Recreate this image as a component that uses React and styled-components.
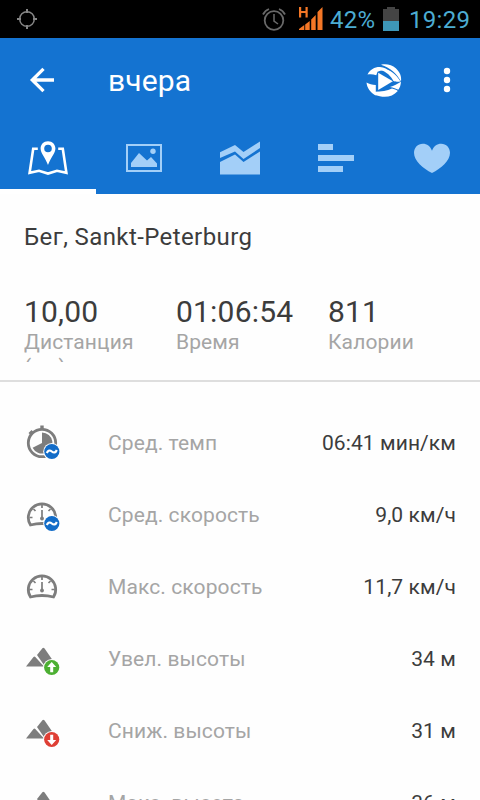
import React, { useState } from 'react';
import styled, { createGlobalStyle } from 'styled-components';

const GlobalStyle = createGlobalStyle`
  * {
    box-sizing: border-box;
  }

  body {
    margin: 0;
    background: #fefefe;
    font-family: Roboto, "Noto Sans", sans-serif;
    overflow: hidden;
  }

  svg {
    display: block;
    flex: none;
  }
`;

const Screen = styled.div`
  display: flex;
  flex-direction: column;
  width: 480px;
  height: 800px;
  overflow: hidden;
  background: #fefefe;
`;

const StatusBar = styled.div`
  display: flex;
  flex: none;
  align-items: center;
  height: 38px;
  padding: 0 10px 0 15px;
  background: #000;
`;

const StatusText = styled.span`
  width: ${(props) => props.width}px;
  margin-left: ${(props) => props.gap}px;
  padding-top: 2px;
  color: #4cacd2;
  font-size: 24px;
  line-height: 36px;
  letter-spacing: 0.3px;
  white-space: nowrap;
`;

const StatusIcons = styled.div`
  display: flex;
  gap: 11px;
  margin-left: auto;
`;

const Header = styled.header`
  flex: none;
  height: 156px;
  background: #1473d1;
`;

const Toolbar = styled.div`
  display: flex;
  align-items: center;
  height: 84px;
  padding-left: 24px;
`;

const IconButton = styled.button`
  display: flex;
  align-items: center;
  justify-content: center;
  width: ${(props) => props.width}px;
  height: 48px;
  padding: 0;
  border: 0;
  background: none;
`;

const MenuButton = styled(IconButton)`
  margin-left: 12px;
`;

const Title = styled.h1`
  flex: 1;
  margin: 0 0 0 48px;
  padding-top: 1px;
  color: #fff;
  font-size: 30px;
  font-weight: 400;
  line-height: 40px;
  letter-spacing: 0.1px;
`;

const Tabs = styled.nav`
  display: flex;
  height: 72px;
`;

const Tab = styled.button`
  display: flex;
  justify-content: center;
  width: 96px;
  padding: 16px 0 0;
  border: 0;
  border-bottom: 5px solid ${(props) => (props.$active ? '#fff' : 'transparent')};
  background: none;
  color: ${(props) => (props.$active ? '#fff' : '#a3cff8')};
`;

const Summary = styled.section`
  flex: none;
  height: 188px;
  padding: 27px 24px 0;
  border-bottom: 2px solid #dedede;
`;

const Activity = styled.h2`
  margin: 0;
  color: #3c3c3c;
  font-size: 24px;
  font-weight: 400;
  line-height: 32px;
  letter-spacing: 0.4px;
`;

const Totals = styled.div`
  display: grid;
  grid-template-columns: repeat(3, 128px);
  gap: 24px;
  height: 70px;
  margin-top: 39px;
  overflow: hidden;
`;

const Total = styled.div`
  color: #3c3c3c;
  font-size: 30px;
  line-height: 40px;
  letter-spacing: 0.2px;
`;

const TotalLabel = styled.div`
  margin-top: -2px;
  color: #a5a5a5;
  font-size: 21px;
  line-height: 25px;
  letter-spacing: 0.12px;
`;

const Stats = styled.ul`
  flex: none;
  margin: 0;
  padding: 25px 24px 0;
  list-style: none;
`;

const Stat = styled.li`
  display: flex;
  align-items: center;
  height: 72px;
`;

const StatLabel = styled.span`
  flex: 1;
  margin-left: 44px;
  color: #a5a5a5;
  font-size: 21px;
  letter-spacing: 0.1px;
`;

const StatValue = styled.span`
  color: #3c3c3c;
  font-size: 21px;
  letter-spacing: 0.1px;
`;

const GpsIcon = () => (
  <svg width="24" height="24" viewBox="0 0 24 24" fill="none" stroke="#858585" strokeWidth="1.5">
    <circle cx="12" cy="12" r="7.3" />
    <path d="M12 2v4M12 18v4M2 12h4M18 12h4" strokeWidth="2" />
  </svg>
);

const AlarmIcon = () => (
  <svg width="26" height="26" viewBox="0 0 26 26" fill="none" stroke="#696969" strokeWidth="1.8">
    <circle cx="13" cy="14.5" r="9.3" />
    <path d="M13 8v7l4 3" strokeWidth="1.5" />
    <path d="M2 8.5Q4 4.5 8 3M18 3q4 1.500 6 5.500" />
  </svg>
);

const SignalIcon = () => (
  <svg width="26" height="25" viewBox="0 -1 26 25" fill="#f47726">
    <path d="M1 0h2.200v4h4.300V0h2.200v10.500H7.500V6H3.200v4.500H1z" />
    <path d="M1 23V22l5.300-4v5zM7.200 23v-5.500l4.500-3.500v9zM13.200 23V12.500L17.700 8v15zM19.500 23V5L24.500 0v23z" />
  </svg>
);

const BatteryIcon = () => (
  <svg width="16" height="24" viewBox="0 0 16 24">
    <path d="M4 0h8v2h4v12H0V2h4z" fill="#444" />
    <path d="M0 14h16v10H0z" fill="#3e97b8" />
  </svg>
);

const BackIcon = () => (
  <svg width="36" height="36" viewBox="0 0 36 36" fill="none" stroke="#fff" strokeWidth="3.3">
    <path d="M19.500 6.800 8.300 18l11.200 11.200M8.500 18H30" />
  </svg>
);

const GlobeIcon = () => (
  <svg width="36" height="36" viewBox="0 0 36 36" fill="#fff">
    <path d="M1.500 12.500C4 7.500 9 4.800 14 5c4 .2 7.500 2 11 5.500-5-2.500-9.500-2.500-13.500-.8l-1.200 3.500C7 12 4 12 1.500 12.500z" />
    <path d="M15 2.800C20 1.500 26 2.800 29.800 6.200c4 3.800 6 8 5.200 13.300C31 12 24 5.500 15 2.800z" />
    <path d="M14.500 7.500C22 6 29 10.500 34.500 19.500c-4 .4-5.500.3-7-.4C25 14 20.500 10 14.500 7.500z" />
    <path d="M12.200 10.800 26.900 19.300 12.200 28z" />
    <path d="M.5 20.500c2.800 1.500 5.500 2.200 9.300 2.400V29l-.3 4.500C4.500 30.500 1 26 .5 20.500z" />
    <path d="M24 25c4-1.300 7.500-3 11-5.200-.3 3.300-1 5.700-2.700 8-2.300-1.300-4.800-2.200-8.300-2.800z" />
    <path d="M8.500 29.700c7 0 12.500-1 17.500-3.200 2.200.4 4.200 1.300 5.800 2.400-4.600 5.300-11.300 7-18 5.300L9 33z" />
  </svg>
);

const MoreIcon = () => (
  <svg width="8" height="26" viewBox="0 0 8 26" fill="#fff">
    <circle cx="4" cy="4" r="3.200" />
    <circle cx="4" cy="13" r="3.200" />
    <circle cx="4" cy="22" r="3.200" />
  </svg>
);

const MapIcon = () => (
  <svg width="42" height="40" viewBox="0 0 42 40" fill="none" stroke="currentColor" strokeWidth="2.600">
    <path d="M10.800 10.800H6.200L2.600 34.800 12 32.800l9 2.800 9-2.800 9.400 2-3.600-24h-4.600" />
    <path
      d="M21 3.200c-4.400 0-7.400 3.200-7.400 7.300 0 4.800 4.400 8.500 7.400 16.500 3-8 7.400-11.700 7.400-16.500 0-4.100-3-7.300-7.400-7.300zm0 3.500a3.800 3.800 0 1 1 0 7.600 3.800 3.800 0 0 1 0-7.600z"
      fill="currentColor"
      stroke="none"
    />
  </svg>
);

const PhotoIcon = () => (
  <svg width="36" height="40" viewBox="0 0 36 40" fill="currentColor">
    <path d="M0 6h36v28H0zm2 2v24h32V8z" fillRule="evenodd" />
    <path d="M5 29v-4l8-10 8 7.500 4-3.500 6 6.500V29z" />
    <circle cx="27" cy="13.300" r="2.700" />
  </svg>
);

const ChartIcon = () => (
  <svg width="40" height="40" viewBox="0 0 40 40" fill="currentColor">
    <path d="M0 14.300 15 7l8.500 7L40 3.500V10L23.500 21l-8.500-7.500L0 20z" />
    <path d="M0 24l15-7.500 8.500 7.500L40 13.500V36.500H0z" />
  </svg>
);

const SplitsIcon = () => (
  <svg width="36" height="40" viewBox="0 0 36 40" fill="currentColor">
    <path d="M0 6h15v6H0zM0 17h36v6H0zM0 28h25v6H0z" />
  </svg>
);

const HeartIcon = () => (
  <svg width="36" height="40" viewBox="0 0 36 40" fill="currentColor">
    <path d="M18 35C9 30.500 0 23 0 14.800 0 9.500 3.800 5.700 8.800 5.700c4.200 0 7.600 2.400 9.200 7 1.600-4.600 5-7 9.200-7 5 0 8.800 3.800 8.800 9.100C36 23 27 30.500 18 35z" />
  </svg>
);

const AverageBadge = () => (
  <>
    <circle cx="27.800" cy="26.500" r="8.600" fill="#fefefe" />
    <circle cx="27.800" cy="26.500" r="7.600" fill="#126cc8" />
    <path d="M22.800 28c1.200-3 3.200-3 5-1.500s3.800 1.500 5-1.500" fill="none" stroke="#fff" strokeWidth="2.200" />
  </>
);

const PaceIcon = () => (
  <svg width="40" height="36" viewBox="0 0 40 36">
    <circle cx="18" cy="18" r="13.700" fill="none" stroke="#7d7d7d" strokeWidth="2.800" />
    <path d="M16.300 .500h3.400V5h-3.400zM4.500 8 7.500 5l2 2L6.500 10z" fill="#7d7d7d" />
    <path d="M18 18V7.500a10.500 10.500 0 1 1-9.400 15.200z" fill="#7d7d7d" />
    <AverageBadge />
  </svg>
);

const SpeedIcon = ({ average }) => (
  <svg width="40" height="36" viewBox="0 0 40 36">
    <path
      d="M6.500 28A13.700 13.700 0 1 1 29.500 28Q18 25 6.500 28z"
      fill="none"
      stroke="#7d7d7d"
      strokeWidth="2.800"
    />
    <path
      d="M18 7.500V11M5.500 20.500h3M30.500 20.500h-3M9.500 12l2 2M26.500 12l-2 2M18 13v8.500"
      fill="none"
      stroke="#7d7d7d"
      strokeWidth="1.700"
    />
    <circle cx="18" cy="21.500" r="1.900" fill="#7d7d7d" />
    {average && <AverageBadge />}
  </svg>
);

const ElevationIcon = ({ badge, down }) => (
  <svg width="40" height="36" viewBox="0 0 40 36">
    <path d="M18.400 7.300q1-1 2 0L33 25.500H21L13 14z" fill="#7d7d7d" />
    <path
      d="M2 25.500 9.500 16q.9-1 1.800 0L20 25.500z"
      fill="#7d7d7d"
      stroke="#fefefe"
      strokeWidth="1.800"
      paintOrder="stroke"
    />
    {badge && (
      <>
        <circle cx="27.700" cy="26.500" r="8.600" fill="#fefefe" />
        <circle cx="27.700" cy="26.500" r="7.600" fill={badge} />
        <path
          d="M27.700 21 32.200 26H29.200v5.300h-3V26h-3z"
          fill="#fff"
          transform={down ? 'rotate(180 27.700 26.500)' : undefined}
        />
      </>
    )}
  </svg>
);

const tabs = [MapIcon, PhotoIcon, ChartIcon, SplitsIcon, HeartIcon];

const totals = [
  { value: '10,00', label: 'Дистанция (км)' },
  { value: '01:06:54', label: 'Время' },
  { value: '811', label: 'Калории' },
];

const stats = [
  { icon: <PaceIcon />, label: 'Сред. темп', value: '06:41 мин/км' },
  { icon: <SpeedIcon average />, label: 'Сред. скорость', value: '9,0 км/ч' },
  { icon: <SpeedIcon />, label: 'Макс. скорость', value: '11,7 км/ч' },
  { icon: <ElevationIcon badge="#4caf32" />, label: 'Увел. высоты', value: '34 м' },
  { icon: <ElevationIcon badge="#df3f35" down />, label: 'Сниж. высоты', value: '31 м' },
  { icon: <ElevationIcon />, label: 'Макс. высота', value: '36 м' },
];

export default function App() {
  const [activeTab, setActiveTab] = useState(0);

  return (
    <>
      <GlobalStyle />
      <Screen>
        <StatusBar>
          <GpsIcon />
          <StatusIcons>
            <AlarmIcon />
            <SignalIcon />
          </StatusIcons>
          <StatusText width={53} gap={6}>42%</StatusText>
          <BatteryIcon />
          <StatusText width={61} gap={10}>19:29</StatusText>
        </StatusBar>
        <Header>
          <Toolbar>
            <IconButton width={36}><BackIcon /></IconButton>
            <Title>вчера</Title>
            <IconButton width={36}><GlobeIcon /></IconButton>
            <MenuButton width={66}><MoreIcon /></MenuButton>
          </Toolbar>
          <Tabs>
            {tabs.map((Icon, index) => (
              <Tab key={index} $active={index === activeTab} onClick={() => setActiveTab(index)}>
                <Icon />
              </Tab>
            ))}
          </Tabs>
        </Header>
        <Summary>
          <Activity>Бег, Sankt-Peterburg</Activity>
          <Totals>
            {totals.map((total) => (
              <div key={total.label}>
                <Total>{total.value}</Total>
                <TotalLabel>{total.label}</TotalLabel>
              </div>
            ))}
          </Totals>
        </Summary>
        <Stats>
          {stats.map((stat) => (
            <Stat key={stat.label}>
              {stat.icon}
              <StatLabel>{stat.label}</StatLabel>
              <StatValue>{stat.value}</StatValue>
            </Stat>
          ))}
        </Stats>
      </Screen>
    </>
  );
}
